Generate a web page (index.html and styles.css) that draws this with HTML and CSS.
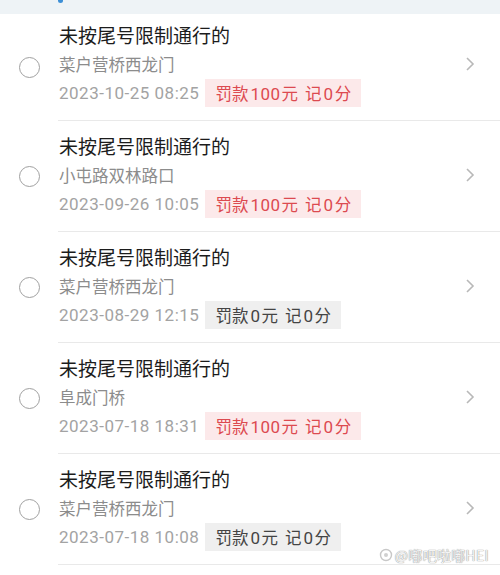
FILE: index.html
```html
<!DOCTYPE html>
<html lang="zh">
<head>
<meta charset="utf-8">
<link rel="stylesheet" href="styles.css">
</head>
<body>
<div class="page">
  <div class="topbar"><span class="tab-mark"></span></div>
  <div class="list">
    <div class="item first">
      <div class="check"><span class="circle"></span></div>
      <div class="content">
        <div class="info">
          <div class="title">未按尾号限制通行的</div>
          <div class="place">菜户营桥西龙门</div>
          <div class="meta"><span class="date">2023-10-25 08:25</span><span class="badge red"><span>罚款<span class="num">100</span>元</span><span class="pts">记<span class="num">0</span>分</span></span></div>
        </div>
        <svg class="chev" viewBox="0 0 10 16" width="10" height="16"><path d="M2 2 L8 8 L2 14" fill="none" stroke="#b8b8b8" stroke-width="1.6"/></svg>
      </div>
    </div>
    <div class="item">
      <div class="check"><span class="circle"></span></div>
      <div class="content">
        <div class="info">
          <div class="title">未按尾号限制通行的</div>
          <div class="place">小屯路双林路口</div>
          <div class="meta"><span class="date">2023-09-26 10:05</span><span class="badge red"><span>罚款<span class="num">100</span>元</span><span class="pts">记<span class="num">0</span>分</span></span></div>
        </div>
        <svg class="chev" viewBox="0 0 10 16" width="10" height="16"><path d="M2 2 L8 8 L2 14" fill="none" stroke="#b8b8b8" stroke-width="1.6"/></svg>
      </div>
    </div>
    <div class="item">
      <div class="check"><span class="circle"></span></div>
      <div class="content">
        <div class="info">
          <div class="title">未按尾号限制通行的</div>
          <div class="place">菜户营桥西龙门</div>
          <div class="meta"><span class="date">2023-08-29 12:15</span><span class="badge gray"><span>罚款<span class="num">0</span>元</span><span class="pts">记<span class="num">0</span>分</span></span></div>
        </div>
        <svg class="chev" viewBox="0 0 10 16" width="10" height="16"><path d="M2 2 L8 8 L2 14" fill="none" stroke="#b8b8b8" stroke-width="1.6"/></svg>
      </div>
    </div>
    <div class="item">
      <div class="check"><span class="circle"></span></div>
      <div class="content">
        <div class="info">
          <div class="title">未按尾号限制通行的</div>
          <div class="place">阜成门桥</div>
          <div class="meta"><span class="date">2023-07-18 18:31</span><span class="badge red"><span>罚款<span class="num">100</span>元</span><span class="pts">记<span class="num">0</span>分</span></span></div>
        </div>
        <svg class="chev" viewBox="0 0 10 16" width="10" height="16"><path d="M2 2 L8 8 L2 14" fill="none" stroke="#b8b8b8" stroke-width="1.6"/></svg>
      </div>
    </div>
    <div class="item">
      <div class="check"><span class="circle"></span></div>
      <div class="content">
        <div class="info">
          <div class="title">未按尾号限制通行的</div>
          <div class="place">菜户营桥西龙门</div>
          <div class="meta"><span class="date">2023-07-18 10:08</span><span class="badge gray"><span>罚款<span class="num">0</span>元</span><span class="pts">记<span class="num">0</span>分</span></span></div>
        </div>
        <svg class="chev" viewBox="0 0 10 16" width="10" height="16"><path d="M2 2 L8 8 L2 14" fill="none" stroke="#b8b8b8" stroke-width="1.6"/></svg>
      </div>
    </div>
  </div>
  <div class="watermark">
    <svg class="wm-logo" viewBox="0 0 14 14" width="14" height="14"><circle cx="7" cy="7" r="5.5" fill="none" stroke="#c8c8c8" stroke-width="1.4"/><circle cx="7" cy="7" r="2" fill="#d0d0d0"/></svg>
    <span class="wm-text">@嘟吧啦嘟HEI</span>
  </div>
</div>
</body>
</html>
```
FILE: styles.css
```css
* { box-sizing: border-box; }
html, body { margin: 0; padding: 0; background: #ffffff; }
body {
  font-family: "Noto Sans CJK SC", "Noto Sans", "Liberation Sans", sans-serif;
  width: 500px;
  height: 575px;
  overflow: hidden;
}
.page { position: relative; width: 500px; height: 575px; }
.topbar {
  height: 14px;
  background: #eef3f6;
  padding-left: 58px;
}
.tab-mark {
  display: block;
  width: 5px;
  height: 3px;
  border-radius: 0 0 3px 3px;
  background: #3d8fd6;
}
.item {
  display: flex;
  align-items: center;
}
.check {
  width: 58px;
  flex: none;
  display: flex;
  align-items: center;
  padding-left: 19px;
}
.circle {
  display: block;
  width: 21px;
  height: 21px;
  border-radius: 50%;
  border: 1.5px solid #a0a0a0;
}
.content {
  flex: 1;
  display: flex;
  align-items: center;
  padding: 11px 25px 13px 1px;
  border-bottom: 1px solid #e9e9e9;
}
.item.first .content { padding-top: 7px; }
.info { flex: 1; }
.title {
  font-size: 19px;
  line-height: 28px;
  color: #1c1c1c;
}
.place {
  font-size: 16.5px;
  line-height: 30px;
  color: #8c8c8c;
}
.meta {
  display: flex;
  align-items: center;
  gap: 6px;
  height: 28px;
}
.date {
  font-family: Roboto, "Noto Sans CJK SC", sans-serif;
  font-size: 17px;
  letter-spacing: 0.5px;
  color: #a3a3a3;
  white-space: nowrap;
}
.badge {
  display: flex;
  align-items: center;
  height: 28px;
  padding: 0 10px;
  font-size: 16.5px;
  white-space: nowrap;
}
.badge .num {
  font-family: Roboto, "Noto Sans CJK SC", sans-serif;
  font-size: 17px;
  letter-spacing: 0.5px;
  padding: 0 1px 0 2px;
}
.badge .pts { margin-left: 7px; }
.badge.red { background: #fce9ea; color: #dc4a50; }
.badge.gray { background: #efefef; color: #444444; }
.chev { flex: none; }
.watermark {
  position: absolute;
  right: 11px;
  bottom: 10px;
  display: flex;
  align-items: center;
  gap: 2px;
}
.wm-text {
  font-size: 14px;
  color: #f4f4f4;
  text-shadow: 0 0 1px #9a9a9a, 0 0 1px #9a9a9a;
  letter-spacing: 0.3px;
}
```
